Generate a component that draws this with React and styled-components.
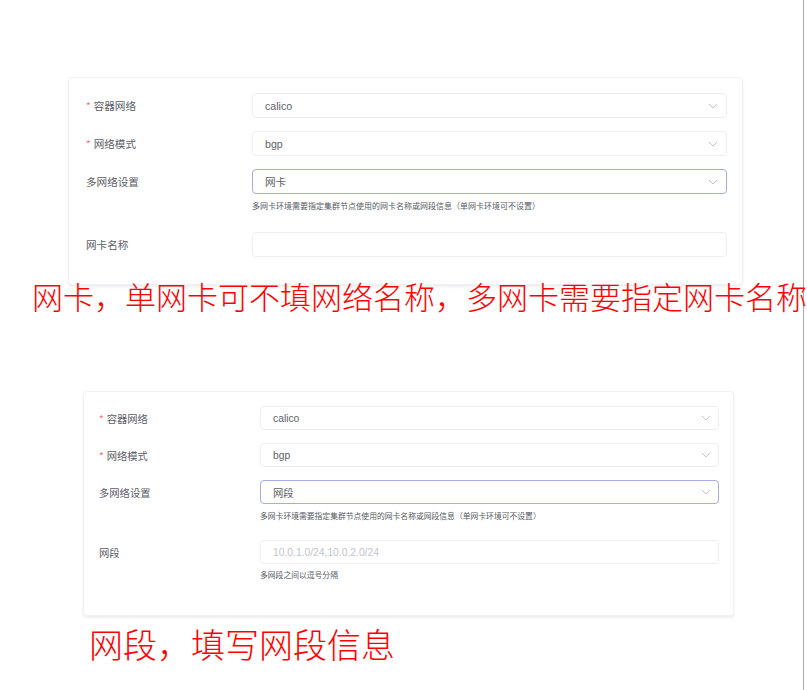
import React from 'react'
import styled, { createGlobalStyle } from 'styled-components';

const GlobalStyle = createGlobalStyle`
  html, body {
    margin: 0;
    padding: 0;
    background: #fff;
  }
  body {
    font-family: "Liberation Sans", "Noto Sans CJK SC", sans-serif;
  }
`;

const Page = styled.div`
  box-sizing: border-box;
  width: 804px;
  min-height: 690px;
  border-right: 1px solid #a9a9a9;
  display: flex;
  flex-direction: column;
  align-items: flex-start;
`;

const Card = styled.div`
  box-sizing: border-box;
  width: ${p => p.$width}px;
  margin-left: ${p => p.$left}px;
  margin-top: ${p => p.$top}px;
  padding: ${p => p.$padTop}px ${p => p.$padRight}px ${p => p.$padBottom}px 0;
  background: #fff;
  border: 1px solid #f0f1f4;
  border-radius: 4px;
  box-shadow: 0 2px 3px rgba(0, 0, 0, 0.07);
`;

const Item = styled.div`
  display: grid;
  grid-template-columns: ${p => p.$labelCol}px 1fr;
  margin-bottom: ${p => p.$mb}px;
  &:last-child {
    margin-bottom: 0;
  }
`;

const Label = styled.div`
  display: flex;
  align-items: center;
  height: ${p => p.$h}px;
  padding-left: ${p => p.$pad}px;
  font-family: "Noto Sans CJK SC", sans-serif;
  font-size: ${p => p.$font}px;
  color: #5d6068;
`;

const Star = styled.span`
  color: #f56c6c;
  margin-right: 3px;
  font-size: 10px;
`;

const Field = styled.div`
  box-sizing: border-box;
  display: flex;
  align-items: center;
  justify-content: space-between;
  height: ${p => p.$h}px;
  padding: 0 ${p => p.$padR}px 0 12px;
  border: 1px solid ${p => (p.$focus ? '#a7abe6' : '#eceef3')};
  border-radius: 4px;
  background: #fff;
  font-family: "Liberation Sans", "Noto Sans CJK SC", sans-serif;
  font-size: ${p => p.$font}px;
  color: ${p => (p.$placeholder ? '#c0c4cc' : '#606266')};
`;

const Hint = styled.div`
  margin-top: ${p => p.$mt}px;
  line-height: 12px;
  font-family: "Noto Sans CJK SC", sans-serif;
  font-size: ${p => p.$font}px;
  color: #555a63;
  white-space: nowrap;
`;

const Caption = styled.div`
  margin-left: ${p => p.$left}px;
  margin-top: ${p => p.$top}px;
  font-family: "Noto Sans CJK SC", sans-serif;
  font-weight: 300;
  font-size: ${p => p.$size}px;
  line-height: 1;
  color: #ff0000;
  white-space: nowrap;
`;

function Chevron() {
  return (
    <svg width="10" height="6" viewBox="0 0 10 6">
      <polyline points="1,1 5,5 9,1" fill="none" stroke="#c3c6d6" strokeWidth="1" />
    </svg>
  );
}

function FormItem({ cfg, label, required, value, placeholder, select, focus, hint, hintMt = 6, mb }) {
  return (
    <Item $labelCol={cfg.labelCol} $mb={mb ?? cfg.gap}>
      <Label $h={cfg.fieldH} $pad={cfg.labelPad} $font={cfg.font}>
        {required && <Star>*</Star>}
        {label}
      </Label>
      <div>
        <Field $h={cfg.fieldH} $font={cfg.font} $focus={focus} $padR={cfg.chevR} $placeholder={!value && placeholder}>
          <span>{value || placeholder}</span>
          {select && <Chevron />}
        </Field>
        {hint && <Hint $font={cfg.hintFont} $mt={hintMt}>{hint}</Hint>}
      </div>
    </Item>
  );
}

const HINT = '多网卡环境需要指定集群节点使用的网卡名称或网段信息（单网卡环境可不设置）';

const cardA = { left: 68, top: 77, width: 675, labelCol: 183, labelPad: 17, padTop: 15, padRight: 15, padBottom: 27, fieldH: 25, gap: 13, font: 10.6, hintFont: 8, chevR: 8 };
const cardB = { left: 83, top: 80, width: 651, labelCol: 176, labelPad: 15, padTop: 14, padRight: 14, padBottom: 34, fieldH: 24, gap: 13, font: 10.3, hintFont: 7.8, chevR: 7 };

function FormCard({ cfg, children }) {
  return (
    <Card
      $left={cfg.left}
      $top={cfg.top}
      $width={cfg.width}
      $padTop={cfg.padTop}
      $padRight={cfg.padRight}
      $padBottom={cfg.padBottom}
    >
      {children}
    </Card>
  );
}

export default function App() {
  return (
    <Page>
      <GlobalStyle />
      <FormCard cfg={cardA}>
        <FormItem cfg={cardA} required label="容器网络" value="calico" select />
        <FormItem cfg={cardA} required label="网络模式" value="bgp" select />
        <FormItem cfg={cardA} label="多网络设置" value="网卡" select focus hint={HINT} mb={20} />
        <FormItem cfg={cardA} label="网卡名称" />
      </FormCard>
      <Caption $left={32} $top={-5} $size={31}>网卡，单网卡可不填网络名称，多网卡需要指定网卡名称</Caption>
      <FormCard cfg={cardB}>
        <FormItem cfg={cardB} required label="容器网络" value="calico" select />
        <FormItem cfg={cardB} required label="网络模式" value="bgp" select />
        <FormItem cfg={cardB} label="多网络设置" value="网段" select focus hint={HINT} mb={18} />
        <FormItem cfg={cardB} label="网段" placeholder="10.0.1.0/24,10.0.2.0/24" hint="多网段之间以逗号分隔" hintMt={5} />
      </FormCard>
      <Caption $left={89} $top={11} $size={34}>网段，填写网段信息</Caption>
    </Page>
  );
}
